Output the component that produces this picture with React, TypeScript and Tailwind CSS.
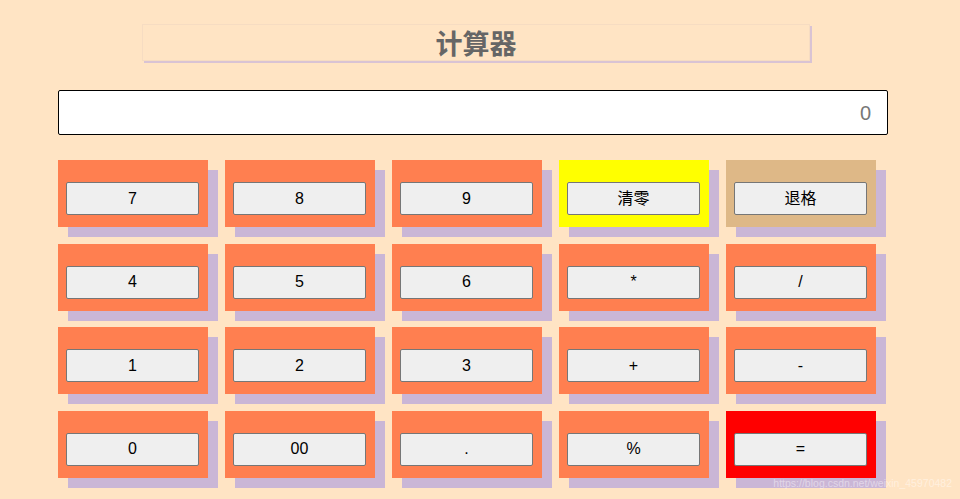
import React from "react";

type Key = { label: string; tone?: "yellow" | "tan" | "red" };

const keys: Key[] = [
  { label: "7" }, { label: "8" }, { label: "9" }, { label: "清零", tone: "yellow" }, { label: "退格", tone: "tan" },
  { label: "4" }, { label: "5" }, { label: "6" }, { label: "*" }, { label: "/" },
  { label: "1" }, { label: "2" }, { label: "3" }, { label: "+" }, { label: "-" },
  { label: "0" }, { label: "00" }, { label: "." }, { label: "%" }, { label: "=", tone: "red" },
];

function toneClass(tone?: Key["tone"]) {
  if (tone === "yellow") return "bg-[#ffff00]";
  if (tone === "tan") return "bg-[#deb887]";
  if (tone === "red") return "bg-[#ff0000]";
  return "bg-[#ff7f50]";
}

export default function App() {
  return (
    <div
      className="relative h-[499px] w-[960px] overflow-hidden bg-[#ffe4c4]"
      style={{ fontFamily: '"Liberation Sans", "Noto Sans CJK SC", sans-serif' }}
    >
      <div className="pl-[142px] pt-[24px]">
        <div className="flex h-[37px] w-[668px] items-center justify-center border border-[#f6dcc2] shadow-[2px_2px_0_#d9c3d4]">
          <h1 className="text-[27px] font-bold leading-none text-[#666666]" style={{ fontFamily: '"Noto Sans CJK SC", sans-serif' }}>
            计算器
          </h1>
        </div>
      </div>

      <div className="ml-[58px] mt-[29px] flex h-[45px] w-[830px] items-center justify-end rounded-[2px] border border-black bg-white pr-[16px]">
        <span className="text-[20px] text-[#777777]">0</span>
      </div>

      <div className="ml-[58px] mt-[25px] grid w-[818px] grid-cols-[repeat(5,150px)] gap-x-[17px] gap-y-[16.6px]">
        {keys.map((k) => (
          <div
            key={k.label}
            className={`h-[67px] pl-[8px] pt-[22px] shadow-[10px_10px_0_#cab6d6] ${toneClass(k.tone)}`}
          >
            <button className="flex h-[33px] w-[133px] items-center justify-center rounded-[2px] border border-[#767676] bg-[#efefef] text-[16px] text-black">
              {k.label}
            </button>
          </div>
        ))}
      </div>

      <span className="absolute bottom-[7px] right-[8px] text-[10.5px] text-white/45">
        https://blog.csdn.net/weixin_45970482
      </span>
    </div>
  );
}
